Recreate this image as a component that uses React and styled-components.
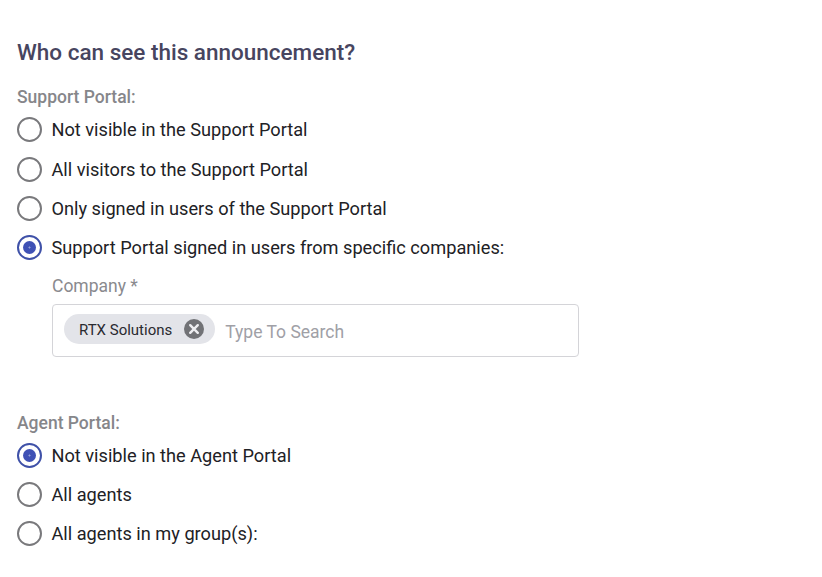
import styled, { createGlobalStyle } from 'styled-components';

const supportOptions = [
  { id: 's1', label: 'Not visible in the Support Portal' },
  { id: 's2', label: 'All visitors to the Support Portal' },
  { id: 's3', label: 'Only signed in users of the Support Portal' },
  { id: 's4', label: 'Support Portal signed in users from specific companies:', checked: true },
];

const agentOptions = [
  { id: 'a1', label: 'Not visible in the Agent Portal', checked: true },
  { id: 'a2', label: 'All agents' },
  { id: 'a3', label: 'All agents in my group(s):' },
];

const App = () => {
  return (
    <Wrapper>
      <GlobalStyle />
      <Title>Who can see this announcement?</Title>
      <GroupLabel>Support Portal:</GroupLabel>
      <RadioList $top='9.2px' $gap='14.4px'>
        {supportOptions.map((item) => (
          <RadioRow key={item.id}>
            <RadioCircle $checked={item.checked} />
            <RadioText>{item.label}</RadioText>
          </RadioRow>
        ))}
      </RadioList>
      <CompanyField>
        <FieldLabel>Company *</FieldLabel>
        <SearchBox>
          <Chip>
            <ChipText>RTX Solutions</ChipText>
            <ChipClose>
              <svg width='20' height='20' viewBox='0 0 20 20'>
                <circle cx='10' cy='10' r='10' fill='#717276' />
                <path d='M6.2 6.2 13.8 13.8M13.8 6.2 6.2 13.8' stroke='#eeeef1' strokeWidth='2.4' strokeLinecap='round' />
              </svg>
            </ChipClose>
          </Chip>
          <Placeholder>Type To Search</Placeholder>
        </SearchBox>
      </CompanyField>
      <GroupLabel $second>Agent Portal:</GroupLabel>
      <RadioList $top='9px' $gap='14px'>
        {agentOptions.map((item) => (
          <RadioRow key={item.id}>
            <RadioCircle $checked={item.checked} />
            <RadioText>{item.label}</RadioText>
          </RadioRow>
        ))}
      </RadioList>
    </Wrapper>
  );
};

const GlobalStyle = createGlobalStyle`
  body {
    margin: 0;
    background: #fff;
    font-family: Roboto, 'Liberation Sans', sans-serif;
  }
`;

const Wrapper = styled.div`
  padding: 38px 0 0 17px;
`;

const Title = styled.h2`
  margin: 0 0 20px;
  font-size: 22.5px;
  line-height: 28px;
  font-weight: 500;
  color: #47455f;
`;

const GroupLabel = styled.div`
  margin-top: ${(props) => (props.$second ? '55px' : '0')};
  font-size: 17.5px;
  line-height: 22px;
  font-weight: 500;
  color: #86868a;
`;

const RadioList = styled.div`
  margin-top: ${(props) => props.$top};
  display: flex;
  flex-direction: column;
  gap: ${(props) => props.$gap};
`;

const RadioRow = styled.label`
  display: flex;
  align-items: center;
  gap: 9.5px;
  height: 25px;
`;

const RadioCircle = styled.span`
  flex: none;
  box-sizing: border-box;
  width: 25px;
  height: 25px;
  border-radius: 50%;
  border: 2.5px solid ${(props) => (props.$checked ? '#3f51a8' : '#79797c')};
  display: flex;
  align-items: center;
  justify-content: center;
  &::after {
    content: '';
    display: ${(props) => (props.$checked ? 'block' : 'none')};
    width: 13px;
    height: 13px;
    border-radius: 50%;
    background: radial-gradient(circle, #97a2d8 0 0.6px, #3f51b5 1.4px);
  }
`;

const RadioText = styled.span`
  font-size: 18.2px;
  color: #212125;
`;

const CompanyField = styled.div`
  margin: 14.6px 0 0 35px;
  width: 527px;
`;

const FieldLabel = styled.div`
  font-size: 17.5px;
  line-height: 22px;
  color: #8a8a8e;
  margin-bottom: 7px;
`;

const SearchBox = styled.div`
  box-sizing: border-box;
  height: 53px;
  border: 1px solid #d4d4d8;
  border-radius: 4px;
  padding: 0 11px;
  display: flex;
  align-items: center;
  gap: 10px;
`;

const Chip = styled.div`
  display: flex;
  align-items: center;
  height: 30px;
  padding: 0 11px 0 15px;
  border-radius: 15px;
  background: #e3e4e9;
  margin-top: -2px;
`;

const ChipText = styled.span`
  margin-top: 1px;
  font-size: 15px;
  color: #2a2a30;
`;

const ChipClose = styled.span`
  display: flex;
  margin-left: 12px;
`;

const Placeholder = styled.span`
  margin-top: 3px;
  font-size: 17.5px;
  color: #a0a0a6;
`;

export default App;
